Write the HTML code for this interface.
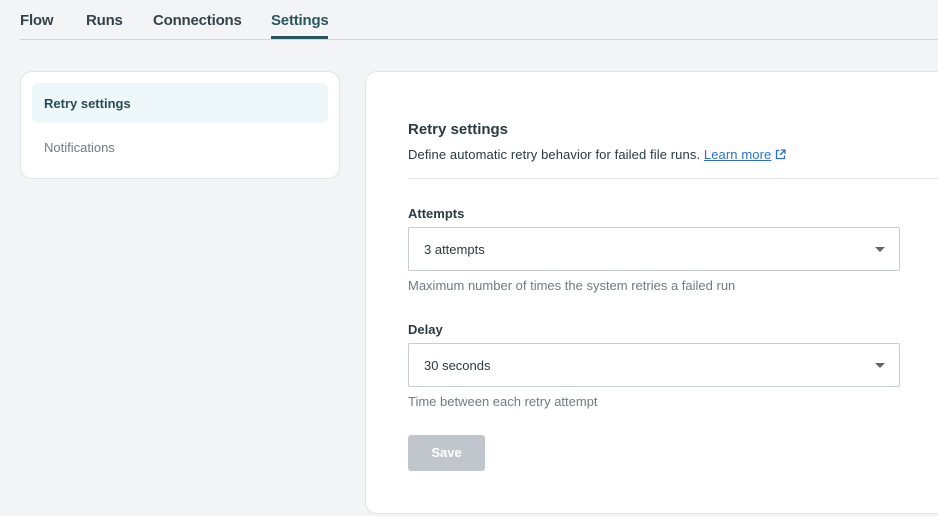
<!DOCTYPE html>
<html><head><meta charset="utf-8"><style>
*{box-sizing:border-box;margin:0;padding:0}
body{width:938px;height:516px;background:#f3f4f6;font-family:"Liberation Sans",sans-serif;position:relative;overflow:hidden;color:#2f3b44}
.a{position:absolute;white-space:nowrap}
.tab{font-size:15px;font-weight:bold;color:#33434c;top:12px;letter-spacing:-0.2px}
.card{position:absolute;background:#fff;border:1px solid #e1e4e8;border-radius:12px}
.lbl{font-size:13px;font-weight:bold;color:#2b3a42}
.help{font-size:13px;color:#6f7b84}
.sel{position:absolute;left:408px;width:492px;height:44px;border:1px solid #c7cdd2;border-radius:2px;background:#fff}
.sel span{position:absolute;left:15px;top:14px;font-size:13px;color:#2b3a42}
.sel i{position:absolute;right:14px;top:19px;width:0;height:0;border-left:5px solid transparent;border-right:5px solid transparent;border-top:5px solid #5d666d}
</style></head><body>
<div class="a tab" style="left:20px">Flow</div>
<div class="a tab" style="left:86px">Runs</div>
<div class="a tab" style="left:153px">Connections</div>
<div class="a tab" style="left:271px;color:#2a5660">Settings</div>
<div class="a" style="left:20px;top:39px;width:918px;height:1px;background:#d3d7db"></div>
<div class="a" style="left:271px;top:36px;width:57px;height:3px;background:#28555e"></div>

<div class="card" style="left:20px;top:71px;width:320px;height:108px"></div>
<div class="a" style="left:32px;top:83px;width:296px;height:40px;background:#eef7f9;border-radius:6px"></div>
<div class="a" style="left:44px;top:96px;font-size:13px;font-weight:bold;color:#2a4b55">Retry settings</div>
<div class="a" style="left:44px;top:140px;font-size:13px;color:#6f7b84">Notifications</div>

<div class="card" style="left:365px;top:71px;width:600px;height:443px"></div>
<div class="a" style="left:408px;top:121px;font-size:15px;font-weight:bold;color:#2b3a42">Retry settings</div>
<div class="a" style="left:408px;top:147px;font-size:13px;color:#2b3a42;letter-spacing:0.1px">Define automatic retry behavior for failed file runs. <span style="color:#2d6fd0;text-decoration:underline">Learn more</span> <svg width="11" height="11" viewBox="0 0 11 11" style="vertical-align:-1px"><path d="M4.5 1.5H1.5V9.5H9.5V6.5" fill="none" stroke="#2d6fd0" stroke-width="1.3"/><path d="M6 1H10V5M10 1L5 6" fill="none" stroke="#2d6fd0" stroke-width="1.3"/></svg></div>
<div class="a" style="left:408px;top:178px;width:530px;height:1px;background:#e1e4e8"></div>

<div class="a lbl" style="left:408px;top:206px">Attempts</div>
<div class="sel" style="top:227px"><span>3 attempts</span><i></i></div>
<div class="a help" style="left:408px;top:278px">Maximum number of times the system retries a failed run</div>

<div class="a lbl" style="left:408px;top:322px">Delay</div>
<div class="sel" style="top:343px"><span>30 seconds</span><i></i></div>
<div class="a help" style="left:408px;top:394px">Time between each retry attempt</div>

<div class="a" style="left:408px;top:435px;width:77px;height:36px;background:#c0c6cb;border-radius:3px;color:#fff;font-size:13px;font-weight:bold;text-align:center;line-height:36px">Save</div>
</body></html>
